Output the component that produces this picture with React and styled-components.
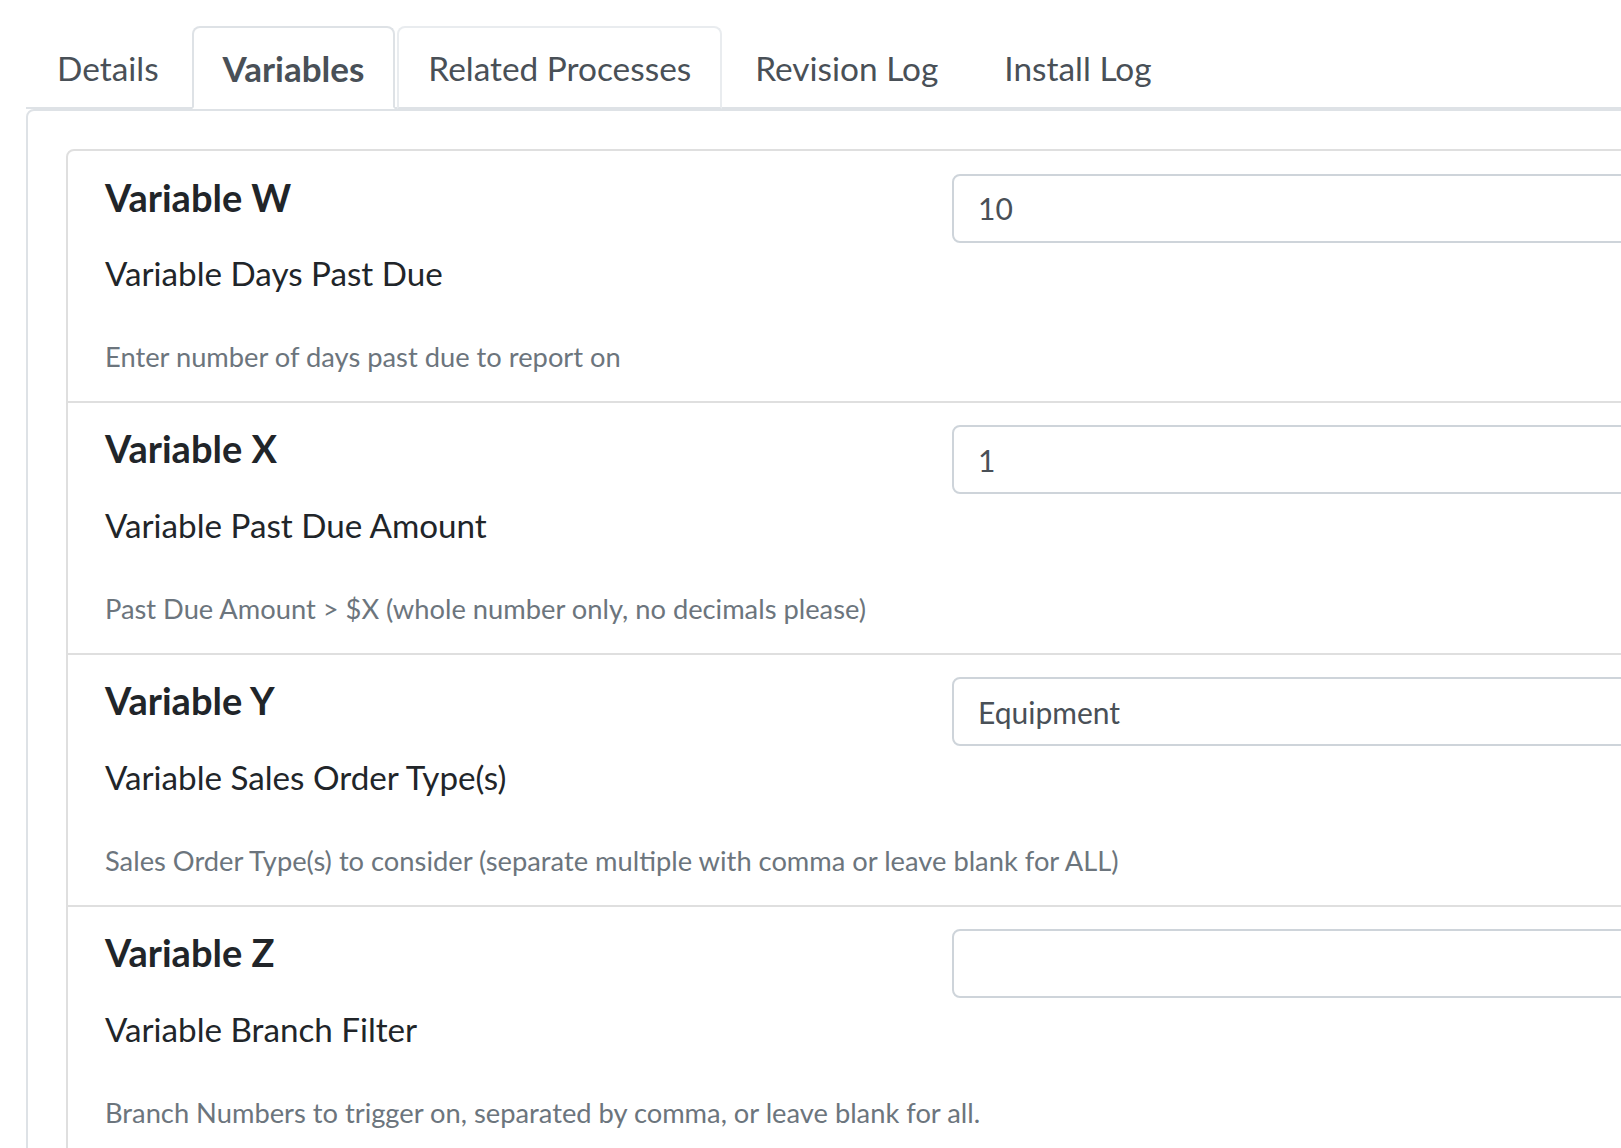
import React from "react";
import styled, { createGlobalStyle } from "styled-components";

const GlobalStyle = createGlobalStyle`
  html, body {
    margin: 0;
    padding: 0;
    overflow: hidden;
    background: #ffffff;
  }
  body {
    font-family: "Lato", "Open Sans", sans-serif;
    color: #212529;
  }
  * { box-sizing: border-box; }
`;

const Page = styled.div`
  width: 1780px;
  padding: 26px 0 0 26px;
`;

const TabBar = styled.nav`
  display: flex;
  align-items: flex-end;
  border-bottom: 2px solid #dee2e6;
`;

const Tab = styled.a`
  display: block;
  margin-right: 2px;
  margin-bottom: -2px;
  padding: 15px ${(p) => (p.$wide ? "31px" : "29px")} 14px 29px;
  border: 2px solid transparent;
  border-radius: 8px 8px 0 0;
  font-size: ${(p) => (p.$active ? "35px" : "33.4px")};
  font-weight: ${(p) => (p.$active ? 700 : 400)};
  line-height: 50px;
  color: #495057;
  text-decoration: none;
  cursor: pointer;
  white-space: nowrap;
  background: ${(p) => (p.$active ? "#ffffff" : "transparent")};
  border-color: ${(p) =>
    p.$active
      ? "#dee2e6 #dee2e6 #ffffff"
      : p.$hover
      ? "#e9ecef #e9ecef #dee2e6"
      : "transparent"};
`;

const TabPanel = styled.section`
  border: 2px solid #dee2e6;
  border-radius: 8px 8px 0 0;
  padding: 38px;
`;

const VariableList = styled.ul`
  list-style: none;
  margin: 0;
  padding: 0;
  border: 2px solid #dfdfdf;
  border-radius: 8px 8px 0 0;
`;

const VariableItem = styled.li`
  display: grid;
  grid-template-columns: 847px 1fr;
  padding: 22.5px 0 24px 37px;
  border-top: ${(p) => (p.$first ? "none" : "2px solid #dfdfdf")};
`;

const LabelColumn = styled.div`
  display: flex;
  flex-direction: column;
  min-width: 0;
`;

const VariableName = styled.h4`
  margin: 1px 0 29px;
  font-size: 38px;
  font-weight: 700;
  line-height: 45.6px;
  color: #212529;
`;

const VariableTitle = styled.h5`
  margin: 0 0 37px;
  font-size: 33.2px;
  font-weight: 400;
  line-height: 49.8px;
  color: #212529;
  white-space: nowrap;
`;

const HelpText = styled.small`
  display: block;
  font-size: 27.3px;
  line-height: 41px;
  color: #6c757d;
  white-space: nowrap;
`;

const InputColumn = styled.div`
  min-width: 0;
`;

const ValueInput = styled.input`
  display: block;
  width: 100%;
  height: 69px;
  padding: 0 24px;
  border: 2px solid #ced4da;
  border-radius: 8px;
  font-family: "Lato", "Open Sans", sans-serif;
  font-size: 30px;
  color: #495057;
  background: #ffffff;
  outline: none;
`;

const tabs = [
  { label: "Details" },
  { label: "Variables", active: true },
  { label: "Related Processes", hover: true },
  { label: "Revision Log", wide: true },
  { label: "Install Log" },
];

const variables = [
  {
    name: "Variable W",
    title: "Variable Days Past Due",
    help: "Enter number of days past due to report on",
    value: "10",
  },
  {
    name: "Variable X",
    title: "Variable Past Due Amount",
    help: "Past Due Amount > $X (whole number only, no decimals please)",
    value: "1",
  },
  {
    name: "Variable Y",
    title: "Variable Sales Order Type(s)",
    help: "Sales Order Type(s) to consider (separate multiple with comma or leave blank for ALL)",
    value: "Equipment",
  },
  {
    name: "Variable Z",
    title: "Variable Branch Filter",
    help: "Branch Numbers to trigger on, separated by comma, or leave blank for all.",
    value: "",
  },
];

export default function App() {
  return (
    <Page>
      <GlobalStyle />
      <TabBar>
        {tabs.map((t) => (
          <Tab key={t.label} $active={t.active} $hover={t.hover} $wide={t.wide}>
            {t.label}
          </Tab>
        ))}
      </TabBar>
      <TabPanel>
        <VariableList>
          {variables.map((v, i) => (
            <VariableItem key={v.name} $first={i === 0}>
              <LabelColumn>
                <VariableName>{v.name}</VariableName>
                <VariableTitle>{v.title}</VariableTitle>
                <HelpText>{v.help}</HelpText>
              </LabelColumn>
              <InputColumn>
                <ValueInput type="text" defaultValue={v.value} />
              </InputColumn>
            </VariableItem>
          ))}
        </VariableList>
      </TabPanel>
    </Page>
  );
}
